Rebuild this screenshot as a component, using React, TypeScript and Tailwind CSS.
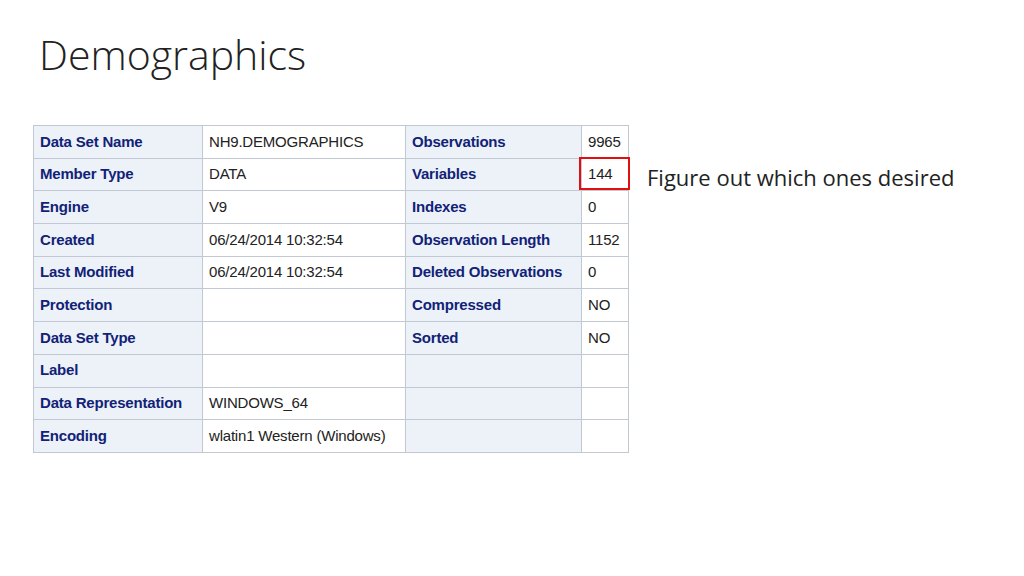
const rows: [string, string, string, string][] = [
  ['Data Set Name', 'NH9.DEMOGRAPHICS', 'Observations', '9965'],
  ['Member Type', 'DATA', 'Variables', '144'],
  ['Engine', 'V9', 'Indexes', '0'],
  ['Created', '06/24/2014 10:32:54', 'Observation Length', '1152'],
  ['Last Modified', '06/24/2014 10:32:54', 'Deleted Observations', '0'],
  ['Protection', '', 'Compressed', 'NO'],
  ['Data Set Type', '', 'Sorted', 'NO'],
  ['Label', '', '', ''],
  ['Data Representation', 'WINDOWS_64', '', ''],
  ['Encoding', 'wlatin1 Western (Windows)', '', ''],
];

export default function App() {
  const head = 'bg-[#edf2f9] text-[#112277] font-bold border-r border-b border-[#c1c8d3] px-[6px] flex items-center whitespace-nowrap overflow-hidden';
  const cell = 'bg-white text-[#222] border-r border-b border-[#c1c8d3] px-[6px] flex items-center whitespace-nowrap';
  return (
    <div className="w-[1024px] h-[576px] bg-white flex flex-col pl-[33px] pt-[28px]" style={{ fontFamily: '"Liberation Sans", Arial, sans-serif' }}>
      <h1 className="ml-[6px] text-[41px] leading-[52px] text-[#222]" style={{ fontFamily: '"Open Sans", "Noto Sans", sans-serif', fontWeight: 300 }}>
        Demographics
      </h1>
      <div className="flex items-start mt-[45px] gap-[18px]">
        <div className="grid grid-cols-[169px_203px_176px_47px] auto-rows-[32.7px] border-l border-t border-[#c1c8d3] text-[15px] tracking-[-0.2px]">
          {rows.map((r, i) => (
            <div key={i} className="contents">
              <div className={head}>{r[0]}</div>
              <div className={cell}>{r[1]}</div>
              <div className={head}>{r[2]}</div>
              <div className={`${cell} relative`}>
                {r[3]}
                {i === 1 && <div className="absolute -left-[3px] -top-[2px] w-[51px] h-[33px] border-2 border-[#e01010]" />}
              </div>
            </div>
          ))}
        </div>
        <div className="mt-[36px] text-[22px] text-[#222]" style={{ fontFamily: '"Open Sans", "Noto Sans", sans-serif' }}>
          Figure out which ones desired
        </div>
      </div>
    </div>
  );
}
